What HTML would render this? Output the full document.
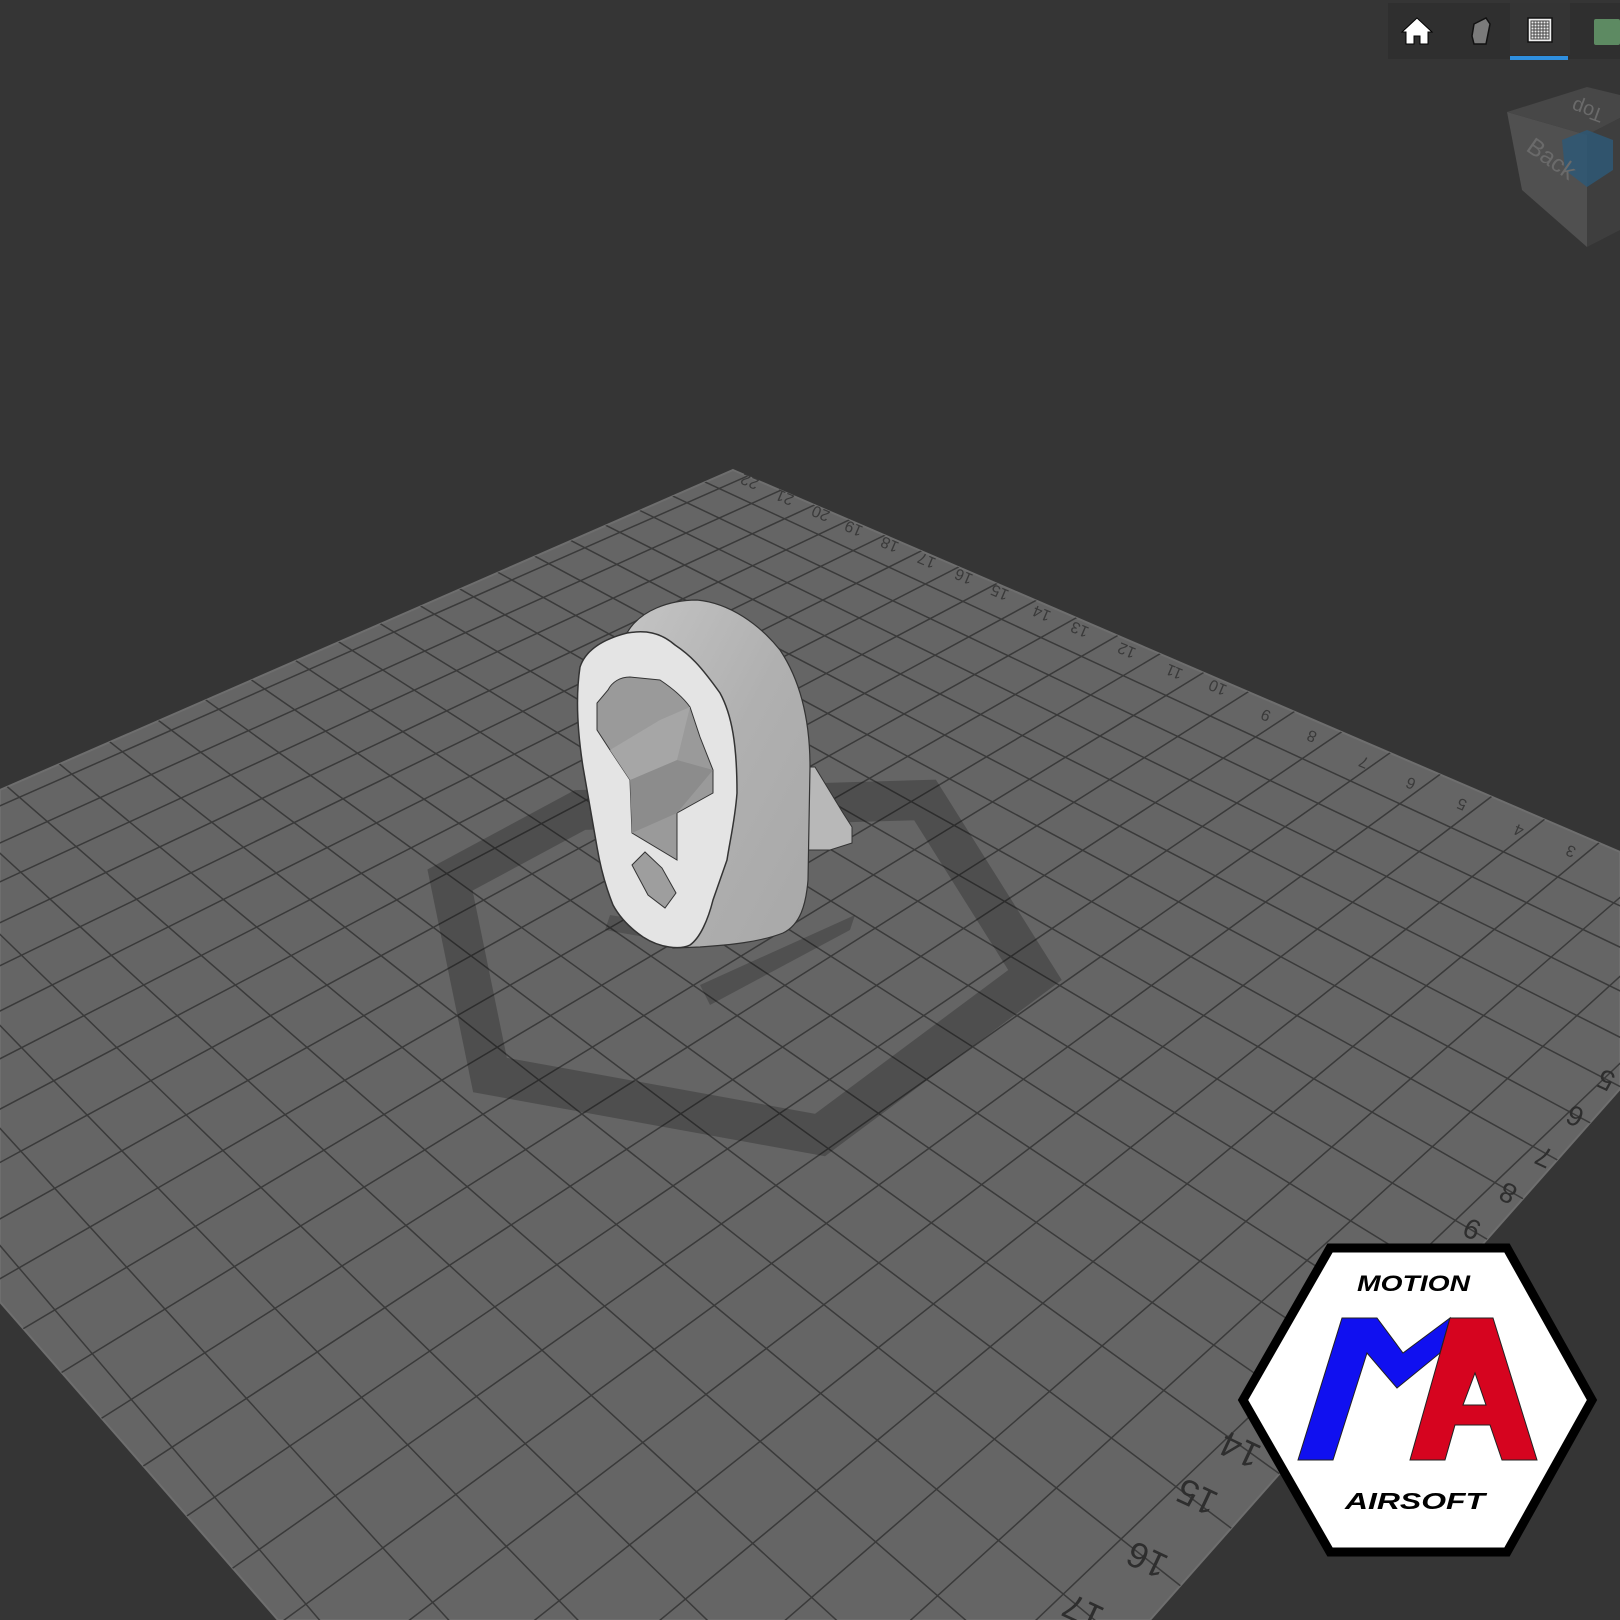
<!DOCTYPE html>
<html><head><meta charset="utf-8"><style>
html,body{margin:0;padding:0;background:#353535;overflow:hidden;width:1620px;height:1620px}
svg{display:block}
</style></head><body>
<svg width="1620" height="1620" viewBox="0 0 1620 1620" xmlns="http://www.w3.org/2000/svg" font-family="Liberation Sans, sans-serif">
<defs>
<clipPath id="pl"><polygon points="733,470 1620,852 1620,1089 1150,1620 278,1620 0,1302 0,790"/></clipPath>
<linearGradient id="body" x1="0" y1="0" x2="1" y2="1">
<stop offset="0" stop-color="#c4c4c4"/><stop offset="0.5" stop-color="#b0b0b0"/><stop offset="1" stop-color="#a8a8a8"/></linearGradient>
</defs>
<rect width="1620" height="1620" fill="#353535"/>
<polygon points="733,470 1620,852 1620,1089 1150,1620 278,1620 0,1302 0,790" fill="#656565" stroke="#6e6e6e" stroke-width="2"/>
<g clip-path="url(#pl)" stroke="#3a3a3a" fill="none">
<g transform="translate(-1538,-557) scale(2)" stroke-width="0.75">
<line x1="0" y1="0" x2="1058" y2="1567"/><line x1="0" y1="0" x2="1151" y2="1567"/><line x1="0" y1="0" x2="1244" y2="1567"/><line x1="0" y1="0" x2="1337" y2="1567"/><line x1="0" y1="0" x2="1430" y2="1567"/><line x1="0" y1="0" x2="1523" y2="1567"/><line x1="0" y1="0" x2="1616" y2="1567"/><line x1="0" y1="0" x2="1709" y2="1567"/><line x1="0" y1="0" x2="1802" y2="1567"/><line x1="0" y1="0" x2="1895" y2="1567"/><line x1="0" y1="0" x2="1988" y2="1567"/><line x1="0" y1="0" x2="2081" y2="1567"/><line x1="0" y1="0" x2="2174" y2="1567"/><line x1="0" y1="0" x2="2267" y2="1567"/><line x1="0" y1="0" x2="2360" y2="1567"/><line x1="0" y1="0" x2="2453" y2="1567"/><line x1="0" y1="0" x2="2546" y2="1567"/><line x1="0" y1="0" x2="2639" y2="1567"/><line x1="0" y1="0" x2="2732" y2="1567"/><line x1="0" y1="0" x2="2825" y2="1567"/><line x1="0" y1="0" x2="2918" y2="1567"/><line x1="0" y1="0" x2="3011" y2="1567"/><line x1="0" y1="0" x2="3104" y2="1567"/><line x1="0" y1="0" x2="3197" y2="1567"/><line x1="0" y1="0" x2="3290" y2="1567"/><line x1="0" y1="0" x2="3383" y2="1567"/>
</g>
<g transform="translate(3518,-746) scale(2)" stroke-width="0.75">
<line x1="0" y1="0" x2="-3981" y2="1756"/><line x1="0" y1="0" x2="-3888" y2="1756"/><line x1="0" y1="0" x2="-3795" y2="1756"/><line x1="0" y1="0" x2="-3702" y2="1756"/><line x1="0" y1="0" x2="-3609" y2="1756"/><line x1="0" y1="0" x2="-3516" y2="1756"/><line x1="0" y1="0" x2="-3423" y2="1756"/><line x1="0" y1="0" x2="-3330" y2="1756"/><line x1="0" y1="0" x2="-3237" y2="1756"/><line x1="0" y1="0" x2="-3144" y2="1756"/><line x1="0" y1="0" x2="-3051" y2="1756"/><line x1="0" y1="0" x2="-2958" y2="1756"/><line x1="0" y1="0" x2="-2865" y2="1756"/><line x1="0" y1="0" x2="-2772" y2="1756"/><line x1="0" y1="0" x2="-2679" y2="1756"/><line x1="0" y1="0" x2="-2586" y2="1756"/><line x1="0" y1="0" x2="-2493" y2="1756"/><line x1="0" y1="0" x2="-2400" y2="1756"/><line x1="0" y1="0" x2="-2307" y2="1756"/><line x1="0" y1="0" x2="-2214" y2="1756"/><line x1="0" y1="0" x2="-2121" y2="1756"/><line x1="0" y1="0" x2="-2028" y2="1756"/><line x1="0" y1="0" x2="-1935" y2="1756"/><line x1="0" y1="0" x2="-1842" y2="1756"/><line x1="0" y1="0" x2="-1749" y2="1756"/>
</g>
</g>
<!-- shadow -->
<polygon points="450,880 580,810 925,800 1035,975 820,1135 490,1075" fill="none" stroke="#000" stroke-opacity="0.22" stroke-width="40" stroke-linejoin="miter"/>
<polygon points="700,985 855,915 850,930 710,1005" fill="#000" fill-opacity="0.2"/>
<polygon points="610,915 700,930 690,945 605,930" fill="#000" fill-opacity="0.18"/>
<!-- edge labels -->
<g fill="#3a3a3a" font-size="16">
<text transform="translate(760,480) rotate(203)">22</text><text transform="translate(795,496) rotate(203)">21</text><text transform="translate(831,512) rotate(203)">20</text><text transform="translate(864,527) rotate(203)">19</text><text transform="translate(900,543) rotate(203)">18</text><text transform="translate(937,559) rotate(203)">17</text><text transform="translate(974,575) rotate(203)">16</text><text transform="translate(1010,591) rotate(203)">15</text><text transform="translate(1052,612) rotate(203)">14</text><text transform="translate(1090,628) rotate(203)">13</text><text transform="translate(1137,649) rotate(203)">12</text><text transform="translate(1184,670) rotate(203)">11</text><text transform="translate(1228,686) rotate(203)">10</text><text transform="translate(1272,712) rotate(203)">9</text><text transform="translate(1318,733) rotate(203)">8</text><text transform="translate(1370,759) rotate(203)">7</text><text transform="translate(1417,780) rotate(203)">6</text><text transform="translate(1468,801) rotate(203)">5</text><text transform="translate(1525,827) rotate(203)">4</text><text transform="translate(1577,848) rotate(203)">3</text>
</g>
<g fill="#2e2e2e" font-size="28" text-anchor="middle" dominant-baseline="central">
<text transform="translate(1606,1080) rotate(205)">5</text><text transform="translate(1575,1116) rotate(205)">6</text><text transform="translate(1544,1157) rotate(205)">7</text><text transform="translate(1508,1193) rotate(205)">8</text><text transform="translate(1472,1229) rotate(205)">9</text>
<text font-size="36" transform="translate(1240,1450) rotate(205)">14</text><text font-size="36" transform="translate(1197,1497) rotate(205)">15</text><text font-size="36" transform="translate(1147,1560) rotate(205)">16</text><text font-size="36" transform="translate(1083,1612) rotate(205)">17</text>
</g>
<!-- object -->
<polygon points="795,767 815,767 843,813 852,827 852,843 830,850 805,850" fill="#b8b8b8" stroke="#333" stroke-width="1"/>
<path d="M627,633 C640,610 670,600 697,600 C730,603 760,625 780,650 C800,680 810,720 810,767 L808,880 C806,905 800,925 783,933 C760,942 730,945 700,947 L673,948 Z" fill="url(#body)" stroke="#333" stroke-width="1.2"/>
<path d="M580,667 C585,652 600,640 627,633 C645,630 660,632 675,645 C690,655 700,665 720,693 C732,715 737,745 737,793 C735,820 730,840 727,860 L713,900 C708,920 700,938 690,945 C680,950 660,948 643,937 C630,928 620,918 613,905 C605,885 600,865 597,847 L583,767 C578,735 575,700 580,667 Z" fill="#e4e4e4" stroke="#333" stroke-width="1.5"/>
<path d="M608,690 C612,682 620,677 630,677 L660,680 C675,690 685,700 690,707 L700,737 L713,770 L713,793 L677,813 L677,860 L632,833 L630,780 L610,750 L597,730 L597,703 Z" fill="#9a9a9a" stroke="#333" stroke-width="1"/>
<polygon points="630,780 677,760 713,770 677,813 632,833" fill="#8c8c8c"/>
<polygon points="610,750 660,720 690,707 677,760 630,780" fill="#a6a6a6"/>
<polygon points="632,865 645,852 662,868 676,893 665,908 648,895" fill="#9e9e9e" stroke="#333" stroke-width="1"/>
<!-- toolbar -->
<rect x="1388" y="3" width="232" height="56" fill="#2f2f2f"/>
<rect x="1510" y="3" width="60" height="52" fill="#343434"/>
<rect x="1510" y="56" width="58" height="4" fill="#2f8fdf"/>
<path d="M1417,18 L1402,32 L1406,32 L1406,44 L1414,44 L1414,36 L1420,36 L1420,44 L1428,44 L1428,32 L1432,32 Z" fill="#fff" stroke="#000" stroke-width="1"/>
<polygon points="1474,24 1486,18 1490,24 1486,44 1474,44 1472,36" fill="#7a7a7a" stroke="#111" stroke-width="1.5"/>
<rect x="1528" y="18" width="24" height="24" fill="#eee" stroke="#111" stroke-width="1.5"/>
<path d="M1531,21h18v18h-18z M1534,21v18 M1537,21v18 M1540,21v18 M1543,21v18 M1546,21v18 M1531,24h18 M1531,27h18 M1531,30h18 M1531,33h18 M1531,36h18" fill="none" stroke="#444" stroke-width="1"/>
<rect x="1594" y="19" width="26" height="26" rx="2" fill="#5d8a62"/>
<!-- nav cube -->
<polygon points="1507,112 1587,87 1620,95 1620,118 1587,135" fill="#474747"/>
<polygon points="1507,112 1587,135 1587,247 1522,190" fill="#505050"/>
<polygon points="1587,135 1620,118 1620,230 1587,247" fill="#3e3e3e"/>
<polygon points="1562,140 1587,130 1613,140 1613,170 1587,187 1565,170" fill="#2e5876" opacity="0.85"/>
<text transform="translate(1525,150) rotate(35)" fill="#6a6a6a" font-size="24">Back</text>
<text transform="translate(1605,110) rotate(200)" fill="#6a6a6a" font-size="20">Top</text>
<!-- logo -->
<polygon points="1330,1248 1507,1248 1592,1400 1507,1552 1330,1552 1243,1400" fill="#fff" stroke="#000" stroke-width="9"/>
<text x="1357" y="1291" font-size="22" font-weight="bold" font-style="italic" fill="#000" textLength="113" lengthAdjust="spacingAndGlyphs">MOTION</text>
<text x="1345" y="1509" font-size="23" font-weight="bold" font-style="italic" fill="#000" textLength="140" lengthAdjust="spacingAndGlyphs">AIRSOFT</text>
<polygon points="1342,1318 1377,1318 1403,1353 1450,1318 1440,1353 1397,1388 1367,1353 1333,1460 1298,1460" fill="#1010f0" stroke="#222" stroke-width="1"/>
<path d="M1450,1318 L1493,1318 L1537,1460 L1502,1460 L1490,1425 L1455,1425 L1445,1460 L1410,1460 Z M1475,1373 L1486,1405 L1463,1405 Z" fill="#d6041f" fill-rule="evenodd" stroke="#222" stroke-width="1"/>
</svg>
</body></html>
